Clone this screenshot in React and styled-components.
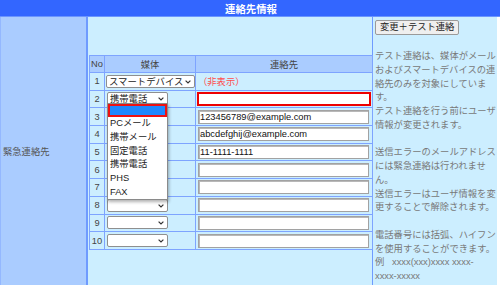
import React from 'react';
import styled, { createGlobalStyle } from 'styled-components';

const GlobalStyle = createGlobalStyle`
  html, body {
    margin: 0;
    padding: 0;
    background: #ffffff;
  }
  body {
    font-family: "Liberation Sans", "Noto Sans CJK JP", sans-serif;
    font-size: 9.3px;
  }
`;

const Page = styled.div`
  width: 500px;
  height: 285px;
  overflow: hidden;
`;

const TitleBar = styled.div`
  height: 16px;
  background: #3366ff;
  border-bottom: 1px solid #6b95ff;
  color: #ffffff;
  font-weight: bold;
  font-size: 10.4px;
  display: flex;
  align-items: center;
  justify-content: center;
  padding-left: 2px;
`;

const Body = styled.div`
  display: grid;
  grid-template-columns: 88px 284px 125px;
  height: 268px;
`;

const LabelCell = styled.div`
  background: #aaccff;
  border-right: 2px solid #6f9bff;
  border-left: 1px solid #94b8ff;
  display: flex;
  align-items: center;
  padding-left: 2px;
  color: #555;
`;

const MainCell = styled.div`
  background: #cceeff;
  padding: 38px 0 0 1px;
  position: relative;
`;

const NoteCell = styled.div`
  background: #cceeff;
  border-left: 1px solid #6f9bff;
  padding: 3px 0 0 2px;
  color: #787878;
  white-space: nowrap;
`;

const ContactTable = styled.table`
  width: 283px;
  table-layout: fixed;
  border-collapse: collapse;
  color: #444;
`;

const HeadCell = styled.th`
  background: #aaccff;
  border: 1px solid #7ea4ff;
  font-weight: normal;
  height: 16px;
  padding: 0;
  text-align: center;
  color: #444;
`;

const Row = styled.tr`
  height: 17.7px;
`;

const Cell = styled.td`
  border: 1px solid #7ea4ff;
  border-left-color: ${(p) => (p.$strong ? '#3f6fff' : '#7ea4ff')};
  padding: 0 1px;
  text-align: ${(p) => (p.$center ? 'center' : 'left')};
  vertical-align: middle;
  position: relative;
`;

const SelectBox = styled.div`
  position: relative;
  box-sizing: border-box;
  width: ${(p) => (p.$wide ? '89px' : '61px')};
  height: 13px;
  margin-left: ${(p) => (p.$wide ? '0' : '1px')};
  margin-top: ${(p) => (p.$open ? '-2px' : '0')};
  background: #ffffff;
  border: 1px solid #8f8f8f;
  border-radius: 2px;
  display: flex;
  align-items: center;
  padding: 0 12px 0 2px;
  color: #222;
  white-space: nowrap;
  overflow: visible;
  font-size: ${(p) => (p.$wide ? '9.4px' : '9.3px')};

  svg {
    position: absolute;
    right: 3px;
    top: 4px;
  }
`;

const OptionList = styled.div`
  position: absolute;
  top: 10px;
  left: -1px;
  width: 61px;
  box-sizing: border-box;
  background: #ffffff;
  border: 1px solid #8a8a8a;
  box-shadow: 1px 2px 3px rgba(0, 0, 0, 0.3);
  z-index: 5;
`;

const OptionItem = styled.div`
  height: 13.7px;
  line-height: 13.7px;
  padding-left: 2px;
  color: #222;
  box-sizing: border-box;
  background: ${(p) => (p.$active ? '#1e88ff' : 'transparent')};
  outline: ${(p) => (p.$active ? '2.5px solid #ee1111' : 'none')};
  outline-offset: -2.5px;
`;

const TextField = styled.input`
  box-sizing: border-box;
  width: ${(p) => (p.$error ? '174px' : '171px')};
  height: 14px;
  margin-left: ${(p) => (p.$error ? '0' : '1px')};
  border: ${(p) => (p.$error ? '2px solid #ee0000' : '1px solid #a2a2a2')};
  box-shadow: ${(p) => (p.$error ? 'none' : 'inset 1px 1px 0 #b8b8b8')};
  background: #ffffff;
  padding: 0 1px;
  font-family: "Liberation Sans", "Noto Sans CJK JP", sans-serif;
  font-size: 9.3px;
  color: #111;
  outline: none;
  display: block;
`;

const HiddenNote = styled.span`
  color: #ff4d4d;
  padding-left: 1px;
`;

const ActionButton = styled.button`
  box-sizing: border-box;
  height: 15px;
  padding: 0 4px;
  background: #efefef;
  border: 1px solid #9a9a9a;
  border-radius: 2px;
  font-family: "Liberation Sans", "Noto Sans CJK JP", sans-serif;
  font-size: 9.3px;
  color: #222;
  line-height: 13px;
`;

const NoteText = styled.p`
  margin: 15px 0 0 0;
  line-height: 13.75px;
`;

const Chevron = () => (
  <svg width="6" height="4" viewBox="0 0 6 4">
    <path d="M0.6 0.6 L3 3 L5.4 0.6" fill="none" stroke="#333" strokeWidth="1.2" />
  </svg>
);

const options = ['', 'PCメール', '携帯メール', '固定電話', '携帯電話', 'PHS', 'FAX'];

const rows = [
  { media: 'スマートデバイス', wide: true, hidden: true },
  { media: '携帯電話', error: true, open: true },
  { media: '', value: '123456789@example.com' },
  { media: '', value: 'abcdefghij@example.com' },
  { media: '', value: '11-1111-1111' },
  { media: '', value: '' },
  { media: '', value: '' },
  { media: '', value: '' },
  { media: '', value: '' },
  { media: '', value: '' },
];

function MediaSelect({ row }) {
  return (
    <SelectBox $wide={row.wide} $open={row.open}>
      {row.media}
      <Chevron />
      {row.open && (
        <OptionList>
          {options.map((o, i) => (
            <OptionItem key={i} $active={i === 0}>
              {o}
            </OptionItem>
          ))}
        </OptionList>
      )}
    </SelectBox>
  );
}

export default function App() {
  return (
    <Page>
      <GlobalStyle />
      <TitleBar>連絡先情報</TitleBar>
      <Body>
        <LabelCell>緊急連絡先</LabelCell>
        <MainCell>
          <ContactTable>
            <colgroup>
              <col style={{ width: '15px' }} />
              <col style={{ width: '91px' }} />
              <col style={{ width: '177px' }} />
            </colgroup>
            <thead>
              <tr>
                <HeadCell>No</HeadCell>
                <HeadCell>媒体</HeadCell>
                <HeadCell>連絡先</HeadCell>
              </tr>
            </thead>
            <tbody>
              {rows.map((row, i) => (
                <Row key={i}>
                  <Cell $center>{i + 1}</Cell>
                  <Cell $strong>
                    <MediaSelect row={row} />
                  </Cell>
                  <Cell>
                    {row.hidden ? (
                      <HiddenNote>（非表示）</HiddenNote>
                    ) : (
                      <TextField
                        readOnly
                        $error={row.error}
                        value={row.value || ''}
                      />
                    )}
                  </Cell>
                </Row>
              ))}
            </tbody>
          </ContactTable>
        </MainCell>
        <NoteCell>
          <ActionButton>変更＋テスト連絡</ActionButton>
          <NoteText>
            テスト連絡は、媒体がメール
            <br />
            およびスマートデバイスの連
            <br />
            絡先のみを対象にしていま
            <br />
            す。
            <br />
            テスト連絡を行う前にユーザ
            <br />
            情報が変更されます。
            <br />
            <br />
            送信エラーのメールアドレス
            <br />
            には緊急連絡は行われませ
            <br />
            ん。
            <br />
            送信エラーはユーザ情報を変
            <br />
            更することで解除されます。
            <br />
            <br />
            電話番号には括弧、ハイフン
            <br />
            を使用することができます。
            <br />
            例&nbsp;&nbsp;&nbsp;xxxx(xxx)xxxx xxxx-
            <br />
            xxxx-xxxxx
          </NoteText>
        </NoteCell>
      </Body>
    </Page>
  );
}
